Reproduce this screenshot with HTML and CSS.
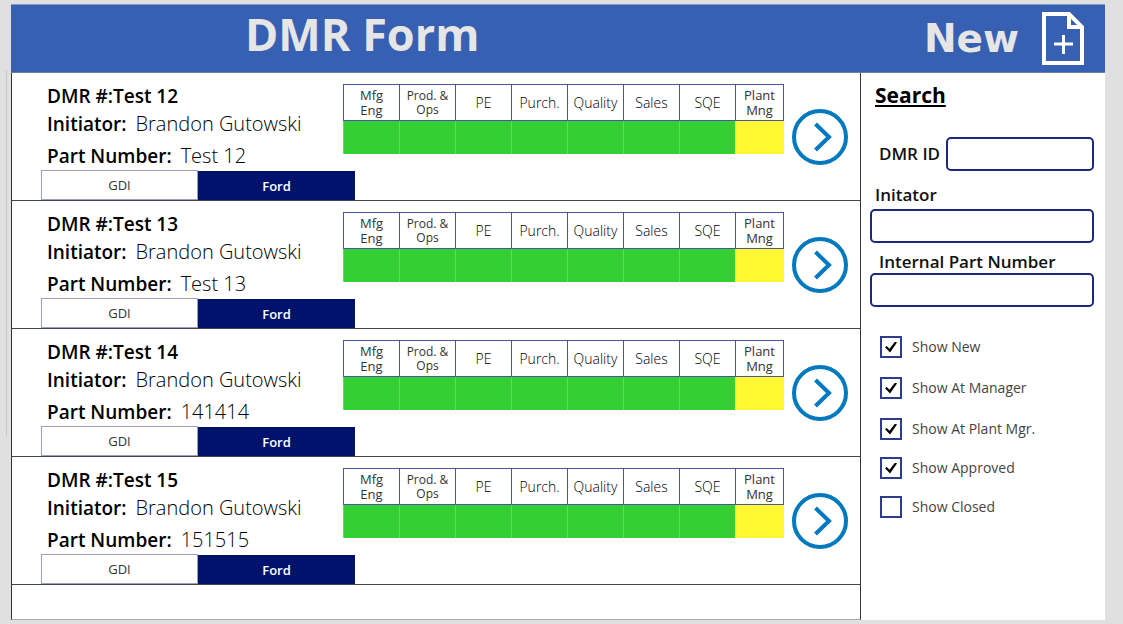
FILE: index.html
```html
<!DOCTYPE html>
<html lang="en">
<head>
    <meta charset="UTF-8">
    <meta name="viewport" content="width=device-width, initial-scale=1.0">
    <title>DMR Form</title>
    <link rel="stylesheet" href="styles.css">
</head>
<body>
    <div class="app">
        <header class="header">
            <h1>DMR Form</h1>
            <div class="new">
                <span>New</span>
                <button type="button" class="new-btn" aria-label="New DMR">
                    <svg width="42" height="53" viewBox="0 0 42 53" fill="none" stroke="#fff">
                        <path d="M2 2H27L40 15V51H2Z" stroke-width="4"/>
                        <path d="M27 2V15H40" stroke-width="4"/>
                        <path d="M12 32H31M21.500 23V42" stroke-width="3"/>
                    </svg>
                </button>
            </div>
        </header>

        <div class="content">
            <main class="list" id="list"></main>

            <aside class="sidebar">
                <h2>Search</h2>
                <form id="searchForm">
                    <div class="field inline">
                        <label for="dmrId">DMR ID</label>
                        <input type="text" id="dmrId">
                    </div>
                    <div class="field">
                        <label for="initiator" class="flush">Initator</label>
                        <input type="text" id="initiator">
                    </div>
                    <div class="field">
                        <label for="partNumber">Internal Part Number</label>
                        <input type="text" id="partNumber">
                    </div>
                    <div class="checks">
                        <label><input type="checkbox" checked>Show New</label>
                        <label><input type="checkbox" checked>Show At Manager</label>
                        <label><input type="checkbox" checked>Show At Plant Mgr.</label>
                    </div>
                    <div class="checks finished">
                        <label><input type="checkbox" checked>Show Approved</label>
                        <label><input type="checkbox">Show Closed</label>
                    </div>
                </form>
            </aside>
        </div>
    </div>

    <script src="script.js"></script>
</body>
</html>
```
FILE: styles.css
```css
* { box-sizing: border-box; }
body {
    font-family: "Open Sans", "Noto Sans", sans-serif;
    margin: 0;
    padding: 4px 18px 4px 11px;
    min-height: 100vh;
    display: flex;
    background: #e0e0e0;
    color: #000;
}
button, input { font-family: inherit; }
.app {
    flex: 1;
    display: flex;
    flex-direction: column;
    position: relative;
    background: white;
}
/* edge of the panel behind the app */
.app::before {
    content: "";
    position: absolute;
    left: -5px;
    top: 66px;
    width: 1px;
    height: 366px;
    background: #c8c8c8;
}

/* Header */
.header {
    display: flex;
    align-items: center;
    justify-content: space-between;
    height: 69px;
    padding: 0 21px 0 234px;
    background: #3760b2;
    border-top: 1px solid #7f9bd0;
    border-bottom: 1px solid #6f7f9f;
    color: #e6e6e6;
}
h1 { margin: 0 0 10px; font-size: 45px; line-height: 60px; font-weight: bold; }
.new {
    display: flex;
    align-items: center;
    gap: 23px;
    font-family: "DejaVu Sans", sans-serif;
    font-size: 39px;
    font-weight: bold;
}
.new-btn { display: flex; padding: 0; border: none; background: none; cursor: pointer; }

.content { flex: 1; display: grid; grid-template-columns: 1fr 244px; }

/* DMR list */
.list {
    border: solid #333;
    border-width: 0 1px 1px 1px;
    border-bottom-color: #aaa;
}
.row {
    height: 128px;
    padding-left: 29px;
    border-bottom: 1px solid #444;
}
.row-top { display: flex; height: 97px; }
.info { flex: 1; padding: 10px 0 0 6px; font-size: 19px; line-height: 27px; white-space: nowrap; }
.info p { margin: 0; font-weight: 600; }
.info p.part { margin-top: 4px; }
.info span { font-size: 20px; font-weight: 300; margin-left: 9px; }
.info .title span { font-size: 19px; font-weight: 600; margin-left: 0; }

.status {
    width: 441px;
    height: 70px;
    margin-top: 11px;
    border-collapse: collapse;
    table-layout: fixed;
    text-align: center;
}
.status th {
    height: 36px;
    padding: 0;
    border: 1px solid #4a559a;
    font-size: 14px;
    line-height: 15px;
    font-weight: 300;
}
.status th.two-line { font-size: 13px; font-weight: 400; color: #333; }
.status th.small { font-size: 12px; line-height: 14px; font-weight: 400; color: #333; }
.status th:last-child { width: 48px; }
.status td { padding: 0; border-left: 1px solid #5fdc5f; background: #33cf33; }
.status td.pending { border-color: #fff833; background: #fff833; }

.open {
    display: flex;
    width: 56px;
    height: 56px;
    margin: 36px 12px 0 8px;
    padding: 0;
    border: none;
    background: none;
    cursor: pointer;
}

.tabs { display: flex; width: 314px; height: 30px; }
.tabs button {
    flex: 1;
    padding: 0;
    border: 1px solid #9a9fc4;
    background: white;
    font-size: 13px;
    font-weight: 400;
    color: #333;
}
.tabs button.active { background: #00126b; border-color: #00126b; color: white; font-weight: 600; margin-top: 1px; }

/* Search */
.sidebar { padding: 8px 11px 0 9px; }
h2 { margin: 0 0 28px 5px; font-size: 21px; line-height: 28px; font-weight: 700; text-decoration: underline; }
.field { display: flex; flex-direction: column; margin-bottom: 8px; font-size: 17px; font-weight: 600; line-height: 22px; color: #111; }
.field label { margin-left: 9px; }
.field label.flush { margin: 0 0 3px 5px; }
.field input {
    width: 100%;
    height: 34px;
    border: 2px solid #1c2879;
    border-radius: 5px;
    padding: 0 8px;
    background: white;
    font-size: 16px;
}
.field.inline { flex-direction: row; align-items: center; gap: 6px; margin-bottom: 13px; }
.field.inline input { flex: 1; min-width: 0; }

.checks { display: flex; flex-direction: column; gap: 19px; margin: 29px 0 0 10px; font-size: 14px; font-weight: 400; color: #444; }
.checks.finished { gap: 17px; margin-top: 17px; }
.checks label { display: flex; align-items: center; gap: 10px; line-height: 22px; }
.checks input {
    appearance: none;
    display: grid;
    place-items: center;
    width: 22px;
    height: 22px;
    margin: 0;
    border: 2px solid #2f3c8c;
    background: white;
}
.checks input:checked::before {
    content: "";
    width: 12px;
    height: 11px;
    background: #000;
    clip-path: polygon(0 52%, 14% 40%, 38% 66%, 84% 0, 100% 10%, 42% 100%);
}
```
FILE: script.js
```js
const forms = [
    { title: 'Test 12', initiator: 'Brandon Gutowski', part: 'Test 12' },
    { title: 'Test 13', initiator: 'Brandon Gutowski', part: 'Test 13' },
    { title: 'Test 14', initiator: 'Brandon Gutowski', part: '141414' },
    { title: 'Test 15', initiator: 'Brandon Gutowski', part: '151515' }
];

document.getElementById('list').innerHTML = forms.map(f => `
    <section class="row">
        <div class="row-top">
            <div class="info">
                <p class="title">DMR #:<span>${f.title}</span></p>
                <p>Initiator:<span>${f.initiator}</span></p>
                <p class="part">Part Number:<span>${f.part}</span></p>
            </div>
            <table class="status">
                <thead>
                    <tr>
                        <th class="two-line">Mfg<br>Eng</th>
                        <th class="small">Prod. &amp;<br>Ops</th>
                        <th>PE</th>
                        <th>Purch.</th>
                        <th>Quality</th>
                        <th>Sales</th>
                        <th>SQE</th>
                        <th class="two-line">Plant<br>Mng</th>
                    </tr>
                </thead>
                <tbody>
                    <tr>${'<td></td>'.repeat(7)}<td class="pending"></td></tr>
                </tbody>
            </table>
            <button type="button" class="open" aria-label="Open ${f.title}">
                <svg width="56" height="56" viewBox="0 0 56 56" fill="none" stroke="#0079bf" stroke-width="4">
                    <circle cx="28" cy="28" r="26"/>
                    <path d="M23.500 15L37 28L23.500 41"/>
                </svg>
            </button>
        </div>
        <div class="tabs">
            <button type="button">GDI</button>
            <button type="button" class="active">Ford</button>
        </div>
    </section>`).join('');
```
